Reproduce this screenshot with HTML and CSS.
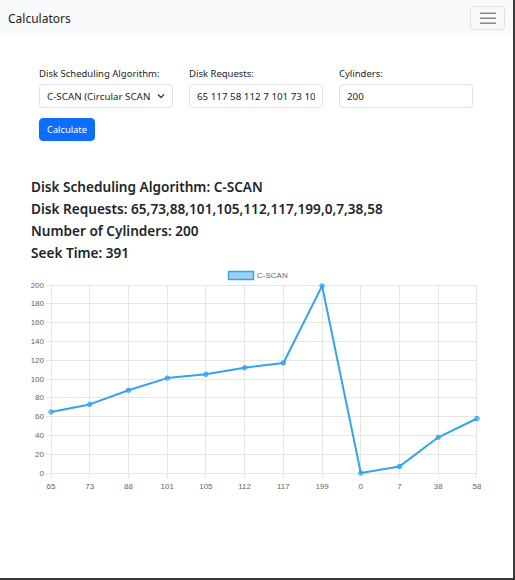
FILE: index.html
```html
<!DOCTYPE html>
<html lang="en">
<head>
<meta charset="utf-8">
<title>Calculators</title>
<link rel="stylesheet" href="styles.css">
</head>
<body>
<div class="frame">
  <nav class="navbar">
    <span class="brand">Calculators</span>
    <button class="toggler" type="button" aria-label="Toggle navigation">
      <svg width="16" height="12" viewBox="0 0 16 12"><path d="M0 1.3H16M0 6.3H16M0 11.3H16" stroke="#888" stroke-width="1.4" fill="none"/></svg>
    </button>
  </nav>
  <main class="container">
    <form class="form-row">
      <div class="field">
        <label class="label">Disk Scheduling Algorithm:</label>
        <div class="select-wrap">
          <select class="control select">
            <option>C-SCAN (Circular SCAN)</option>
          </select>
          <svg class="chevron" width="8" height="6" viewBox="0 0 8 6"><path d="M1 1.5L4 4.5L7 1.5" stroke="#343a40" stroke-width="1.3" fill="none"/></svg>
        </div>
      </div>
      <div class="field">
        <label class="label">Disk Requests:</label>
        <input class="control" type="text" value="65 117 58 112 7 101 73 105 88 199 0 38">
      </div>
      <div class="field">
        <label class="label">Cylinders:</label>
        <input class="control" type="text" value="200">
      </div>
    </form>
    <div class="actions"><button class="btn" type="button">Calculate</button></div>
    <section class="results">
      <h5>Disk Scheduling Algorithm: C-SCAN</h5>
      <h5>Disk Requests: 65,73,88,101,105,112,117,199,0,7,38,58</h5>
      <h5>Number of Cylinders: 200</h5>
      <h5>Seek Time: 391</h5>
    </section>
    <svg class="chart" width="450" height="225" viewBox="31 266 450 225">
      <g class="grid" stroke="#e5e5e5" stroke-width="1">
        <line x1="46" y1="473.5" x2="477" y2="473.5"/>
        <line x1="46" y1="454.5" x2="477" y2="454.5"/>
        <line x1="46" y1="435.5" x2="477" y2="435.5"/>
        <line x1="46" y1="416.5" x2="477" y2="416.5"/>
        <line x1="46" y1="397.5" x2="477" y2="397.5"/>
        <line x1="46" y1="379.5" x2="477" y2="379.5"/>
        <line x1="46" y1="360.5" x2="477" y2="360.5"/>
        <line x1="46" y1="341.5" x2="477" y2="341.5"/>
        <line x1="46" y1="322.5" x2="477" y2="322.5"/>
        <line x1="46" y1="303.5" x2="477" y2="303.5"/>
        <line x1="46" y1="285.5" x2="477" y2="285.5"/>
        <line x1="51.5" y1="285" x2="51.5" y2="478"/>
        <line x1="89.5" y1="285" x2="89.5" y2="478"/>
        <line x1="128.5" y1="285" x2="128.5" y2="478"/>
        <line x1="167.5" y1="285" x2="167.5" y2="478"/>
        <line x1="205.5" y1="285" x2="205.5" y2="478"/>
        <line x1="244.5" y1="285" x2="244.5" y2="478"/>
        <line x1="283.5" y1="285" x2="283.5" y2="478"/>
        <line x1="322.5" y1="285" x2="322.5" y2="478"/>
        <line x1="360.5" y1="285" x2="360.5" y2="478"/>
        <line x1="399.5" y1="285" x2="399.5" y2="478"/>
        <line x1="438.5" y1="285" x2="438.5" y2="478"/>
        <line x1="476.5" y1="285" x2="476.5" y2="478"/>
      </g>
      <g class="ylabels" text-anchor="end">
        <text x="44" y="476">0</text>
        <text x="44" y="457">20</text>
        <text x="44" y="438">40</text>
        <text x="44" y="419">60</text>
        <text x="44" y="400">80</text>
        <text x="44" y="382">100</text>
        <text x="44" y="363">120</text>
        <text x="44" y="344">140</text>
        <text x="44" y="325">160</text>
        <text x="44" y="306">180</text>
        <text x="44" y="288">200</text>
      </g>
      <g class="xlabels" text-anchor="middle">
        <text x="51" y="489">65</text>
        <text x="89.7" y="489">73</text>
        <text x="128.5" y="489">88</text>
        <text x="167.2" y="489">101</text>
        <text x="205.9" y="489">105</text>
        <text x="244.6" y="489">112</text>
        <text x="283.4" y="489">117</text>
        <text x="322.1" y="489">199</text>
        <text x="360.8" y="489">0</text>
        <text x="399.6" y="489">7</text>
        <text x="438.3" y="489">38</text>
        <text x="477" y="489">58</text>
      </g>
      <g class="legend">
        <rect x="228.5" y="271.5" width="25" height="8" fill="rgba(54,162,235,0.5)" stroke="#36a2eb" stroke-width="1.5"/>
        <text x="257" y="278">C-SCAN</text>
      </g>
      <polyline class="series" points="51,411.9 89.7,404.4 128.5,390.3 167.2,378.1 205.9,374.3 244.6,367.7 283.4,363 322.1,285.9 360.8,473 399.6,466.4 438.3,437.3 477,418.5" fill="none" stroke="#36a2eb" stroke-width="2" stroke-linejoin="round"/>
      <g class="points" fill="rgba(54,162,235,0.5)" stroke="#36a2eb" stroke-width="1">
        <circle cx="51" cy="411.9" r="2.2"/>
        <circle cx="89.7" cy="404.4" r="2.2"/>
        <circle cx="128.5" cy="390.3" r="2.2"/>
        <circle cx="167.2" cy="378.1" r="2.2"/>
        <circle cx="205.9" cy="374.3" r="2.2"/>
        <circle cx="244.6" cy="367.7" r="2.2"/>
        <circle cx="283.4" cy="363" r="2.2"/>
        <circle cx="322.1" cy="285.9" r="2.2"/>
        <circle cx="360.8" cy="473" r="2.2"/>
        <circle cx="399.6" cy="466.4" r="2.2"/>
        <circle cx="438.3" cy="437.3" r="2.2"/>
        <circle cx="477" cy="418.5" r="2.2"/>
      </g>
    </svg>
  </main>
</div>
</body>
</html>
```
FILE: styles.css
```css
* { box-sizing: border-box; }
html, body { margin: 0; padding: 0; background: #fff; }
body {
  font-family: "Noto Sans", "Open Sans", sans-serif;
  color: #212529;
}
.frame {
  width: 515px;
  height: 580px;
  overflow: hidden;
  border-right: 2px solid #3a3a3a;
  border-bottom: 2px solid #3a3a3a;
}
.navbar {
  height: 35px;
  background: #f8f9fa;
  display: flex;
  align-items: center;
  justify-content: space-between;
  padding: 0 8px 0 8px;
}
.brand {
  font-size: 12px;
  color: #1a1a1a;
  padding-top: 1px;
}
.toggler {
  width: 35px;
  height: 24px;
  border: 1px solid rgba(0,0,0,0.1);
  border-radius: 4px;
  background: transparent;
  display: flex;
  align-items: center;
  justify-content: center;
  padding: 0;
}
.container {
  padding: 0 0 0 31px;
  width: 481px;
}
.form-row {
  display: grid;
  grid-template-columns: 134px 134px 134px;
  column-gap: 16px;
  padding: 32px 8px 0 8px;
  margin: 0;
}
.field { display: flex; flex-direction: column; }
.label {
  font-size: 9.5px;
  line-height: 14px;
  margin-bottom: 3px;
  color: #212529;
}
.control {
  display: block;
  height: 24px;
  width: 100%;
  border: 1px solid #dee2e6;
  border-radius: 4px;
  font-family: inherit;
  font-size: 9.8px;
  color: #212529;
  padding: 0 7px;
  background: #fff;
  outline: none;
}
.select-wrap { position: relative; }
.select {
  appearance: none;
  -webkit-appearance: none;
  padding-right: 22px;
}
.chevron {
  position: absolute;
  right: 8px;
  top: 9px;
  pointer-events: none;
}
.actions { padding: 10px 8px 0 8px; }
.btn {
  display: block;
  height: 23px;
  padding: 0 7px;
  background: #0d6efd;
  color: #fff;
  border: 1px solid #0d6efd;
  border-radius: 4px;
  font-family: inherit;
  font-size: 9.3px;
}
.results { padding-top: 34.5px; }
.results h5 {
  margin: 0;
  font-size: 13.6px;
  font-weight: 600;
  line-height: 22.3px;
  color: #212529;
}
.chart {
  display: block;
  margin-top: 1.5px;
}
.chart text {
  font-family: "Liberation Sans", Arial, sans-serif;
  font-size: 8px;
  fill: #666;
}
```
